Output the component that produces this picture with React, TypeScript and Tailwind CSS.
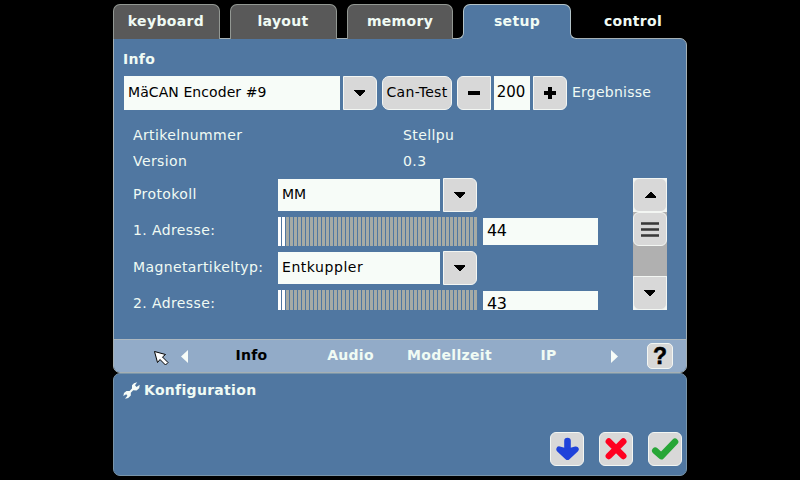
import type { ReactNode } from "react";

const btn = "flex shrink-0 items-center justify-center border border-[#f3f6f3] bg-[#d8d8d8] text-black";
const field = "shrink-0 bg-[#f7fcf8] text-black pl-[4px] whitespace-nowrap";

function Triangle({ dir }: { dir: "up" | "down" | "left" | "right" }) {
  if (dir === "up" || dir === "down") {
    return (
      <svg
        className={dir === "down" ? "mr-[1px]" : "ml-[1px]"}
        width="11"
        height="6"
        viewBox="0 0 11 6"
        fill="currentColor"
        shapeRendering="crispEdges"
      >
        <path d={dir === "up" ? "M5 0h1L11 5V6H0V5Z" : "M0 0H11V1L6 6H5L0 1Z"} />
      </svg>
    );
  }
  return (
    <svg width="7" height="13" viewBox="0 0 7 13" fill="currentColor">
      <path d={dir === "left" ? "M7 0V13L0 6.5Z" : "M0 0L7 6.5L0 13Z"} />
    </svg>
  );
}

function Tab({ label, className }: { label: string; className: string }) {
  return (
    <div className={`h-[35px] shrink-0 rounded-t-[7px] border border-b-0 border-[#939893] bg-[#595959] text-center text-[14px] font-bold leading-[32px] ${className}`}>
      {label}
    </div>
  );
}

function Select({ value, className }: { value: string; className: string }) {
  return (
    <div className="flex h-[34px] items-center gap-[3px]">
      <div className={`${field} h-[32px] w-[162px] leading-[31px] ${className}`}>{value}</div>
      <div className={`${btn} h-[34px] w-[34px] rounded-r-[6px]`}>
        <Triangle dir="down" />
      </div>
    </div>
  );
}

function Slider({ value }: { value: string }) {
  return (
    <div className="flex items-start gap-[6px]">
      <div className="flex h-[29px] w-[199px] shrink-0 gap-px overflow-hidden">
        {Array.from({ length: 50 }, (_, i) => (
          <span key={i} className={`h-full w-[3px] shrink-0 ${i < 2 ? "bg-white" : "bg-[#a6aba5]"}`} />
        ))}
      </div>
      <div className={`${field} mt-px h-[27px] w-[115px] text-[16px] leading-[25px] tracking-[-0.4px]`}>{value}</div>
    </div>
  );
}

function Row({ label, className, children }: { label: string; className: string; children?: ReactNode }) {
  return (
    <div className={`flex shrink-0 ${className}`}>
      <div className="w-[145px] shrink-0 whitespace-nowrap tracking-[0.39px]">{label}</div>
      {children}
    </div>
  );
}

export default function App() {
  return (
    <div className="relative h-[480px] w-[800px] overflow-hidden bg-black pl-[113px] pt-[4px] font-['DejaVu_Sans',sans-serif] text-[14px] tracking-[0.3px] text-[#f0fbf4]">
      <div className="flex h-[35px] w-[574px]">
        <Tab label="keyboard" className="w-[107px] pr-[1px] tracking-[0.35px]" />
        <Tab label="layout" className="ml-[10px] w-[107px] pr-[1px] tracking-[0.3px]" />
        <Tab label="memory" className="ml-[10px] w-[106px] tracking-[0.3px]" />
        <div className="relative z-10 ml-[10px] h-[35px] w-[108px] shrink-0 rounded-t-[7px] border border-b-0 border-[#b3c3c8] bg-[#5077a1] text-center font-bold leading-[32px]">
          setup
          <span className="absolute -left-[7px] bottom-0 h-[7px] w-[7px] bg-[#5077a1]">
            <span className="absolute inset-0 rounded-br-[6px] border-b border-r border-[#b3c3c8] bg-black" />
          </span>
          <span className="absolute -right-[7px] bottom-0 h-[7px] w-[7px] bg-[#5077a1]">
            <span className="absolute inset-0 rounded-bl-[6px] border-b border-l border-[#b3c3c8] bg-black" />
          </span>
        </div>
        <div className="ml-[8px] w-[108px] text-center font-bold leading-[34px]">control</div>
      </div>

      <main className="-mt-px h-[335px] w-[574px] overflow-hidden rounded-b-[7px] rounded-tr-[7px] border border-[#a5b0b4] bg-[#5077a1]">
        <h1 className="h-[37px] pl-[9px] pt-[10px] font-bold leading-[20px]">Info</h1>

        <div className="flex h-[34px] pl-[10px]">
          <div className={`${field} h-[34px] w-[216px] leading-[32px] tracking-[0.08px]`}>MäCAN Encoder #9</div>
          <div className={`${btn} ml-[3px] h-[34px] w-[34px] rounded-r-[6px]`}>
            <Triangle dir="down" />
          </div>
          <div className={`${btn} ml-[5px] h-[34px] w-[70px] rounded-[7px] pb-[2px]`}>Can-Test</div>
          <div className={`${btn} ml-[5px] h-[34px] w-[34px] rounded-l-[6px]`}>
            <span className="h-[4px] w-[12px] bg-black" />
          </div>
          <div className="ml-[3px] h-[34px] w-[36px] bg-[#f7fcf8] pr-[2px] text-center text-[15px] leading-[32px] tracking-normal text-black">200</div>
          <div className={`${btn} ml-[3px] h-[34px] w-[34px] rounded-r-[6px]`}>
            <svg width="12" height="12" viewBox="0 0 12 12" shapeRendering="crispEdges">
              <path d="M4 0h4v4h4v4H8v4H4V8H0V4h4z" />
            </svg>
          </div>
          <div className="ml-[5px] leading-[32px] tracking-[0.25px]">Ergebnisse</div>
        </div>

        <div className="flex h-[201px] pl-[19px] pt-[15px]">
          <div className="flex h-[185px] w-[500px] flex-col overflow-hidden">
            <Row label="Artikelnummer" className="h-[26px] leading-[20px]">
              <span className="ml-[125px] tracking-[0.4px]">Stellpu</span>
            </Row>
            <Row label="Version" className="h-[27px] leading-[20px]">
              <span className="ml-[125px] tracking-[0.4px]">0.3</span>
            </Row>
            <Row label="Protokoll" className="h-[39px] leading-[33px]">
              <Select value="MM" className="tracking-normal" />
            </Row>
            <Row label="1. Adresse:" className="h-[34px] leading-[27px]">
              <Slider value="44" />
            </Row>
            <Row label="Magnetartikeltyp:" className="h-[39px] leading-[33px]">
              <Select value="Entkuppler" className="tracking-[0.55px]" />
            </Row>
            <Row label="2. Adresse:" className="h-[29px] leading-[27px]">
              <Slider value="43" />
            </Row>
          </div>
          <div className="mt-[53px] flex h-[132px] w-[34px] flex-col bg-[#b0b0b0]">
            <div className="bg-[#f3f6f3]">
              <div className={`${btn} h-[34px] w-[34px] rounded-[6px]`}>
                <Triangle dir="up" />
              </div>
            </div>
            <div className={`${btn} h-[34px] w-[34px] flex-col gap-[3px] rounded-[6px]`}>
              {[0, 1, 2].map((i) => (
                <span key={i} className="h-[3px] w-[18px] border-y border-[#5c5c5c] bg-[#393939]" />
              ))}
            </div>
            <div className="mt-auto bg-[#f3f6f3]">
              <div className={`${btn} h-[34px] w-[34px] rounded-b-[6px]`}>
                <Triangle dir="down" />
              </div>
            </div>
          </div>
        </div>

        <div className="mt-[28px] flex h-[34px] items-center border-t border-[#aeb9c1] bg-[#92abc8] pb-[1px] font-bold">
          <span className="ml-[67px] text-[#f7fcf8]">
            <Triangle dir="left" />
          </span>
          <span className="ml-[14px] w-[99px] pb-[2px] text-center leading-[30px] text-black">Info</span>
          <span className="w-[99px] pb-[2px] text-center leading-[30px]">Audio</span>
          <span className="w-[99px] pb-[2px] text-center leading-[30px]">Modellzeit</span>
          <span className="w-[99px] pb-[2px] text-center leading-[30px]">IP</span>
          <span className="ml-[13px] text-[#f7fcf8]">
            <Triangle dir="right" />
          </span>
          <div className={`${btn} ml-[29px] h-[26px] w-[26px] rounded-[5px] font-['Liberation_Sans',sans-serif] text-[23px] leading-[24px] tracking-normal`}>
            <span className="[-webkit-text-stroke:0.5px_black]">?</span>
          </div>
        </div>
      </main>

      <section className="flex h-[103px] w-[574px] flex-col justify-between rounded-[7px] border border-[#7995aa] bg-[#5077a1]">
        <div className="flex items-center gap-[4px] pl-[9px] pt-[6px] font-bold leading-[20px]">
          <svg width="17" height="17" viewBox="0 0 17 17" fill="#f7fcf8">
            <path d="M11 1.2L14.2 .3L12 3.3L13.5 5L16.7 2.7L16.2 6.2L13.5 8.4L10.2 8.2L7.8 10.8V13.5L5.2 16L2 16.7L4.4 13.8L3.2 12.2L.3 13.9L1 10.9L3.5 8.9L6.6 9L9 6.4V3.2Z" />
          </svg>
          Konfiguration
        </div>
        <div className="flex justify-end gap-[15px] pb-[9px] pr-[4px]">
          <div className={`${btn} h-[34px] w-[34px] rounded-[6px]`}>
            <svg width="24" height="24" viewBox="0 0 24 24" fill="none" stroke="#1f42da" strokeLinecap="round" strokeLinejoin="round">
              <path d="M12.5 4V15" strokeWidth="6.6" />
              <path d="M4.2 12.3L12.5 20L20.8 12.3L12.5 14.5Z" fill="#1f42da" strokeWidth="5.8" />
            </svg>
          </div>
          <div className={`${btn} h-[34px] w-[34px] rounded-[6px]`}>
            <svg width="24" height="24" viewBox="0 0 24 24" fill="none" stroke="#ff0020" strokeWidth="6.4" strokeLinecap="round">
              <path d="M4.8 4.5L19.3 19M19.3 4.5L4.8 19" />
            </svg>
          </div>
          <div className={`${btn} h-[34px] w-[34px] rounded-[6px]`}>
            <svg width="28" height="24" viewBox="0 0 28 24" fill="none" stroke="#27a637" strokeWidth="6.6" strokeLinecap="round" strokeLinejoin="round">
              <path d="M4.3 13.8L10.3 19.1L24 4.8" />
            </svg>
          </div>
        </div>
      </section>

      <svg className="absolute left-[154px] top-[351px]" width="15" height="15" viewBox="0 0 15 15" fill="#fff" stroke="#000" strokeWidth="1">
        <path d="M.5 .5L11.5 3.5L8.5 6L14 11.5L11.5 14L6 8.5L3.5 11.5Z" />
      </svg>
    </div>
  );
}
